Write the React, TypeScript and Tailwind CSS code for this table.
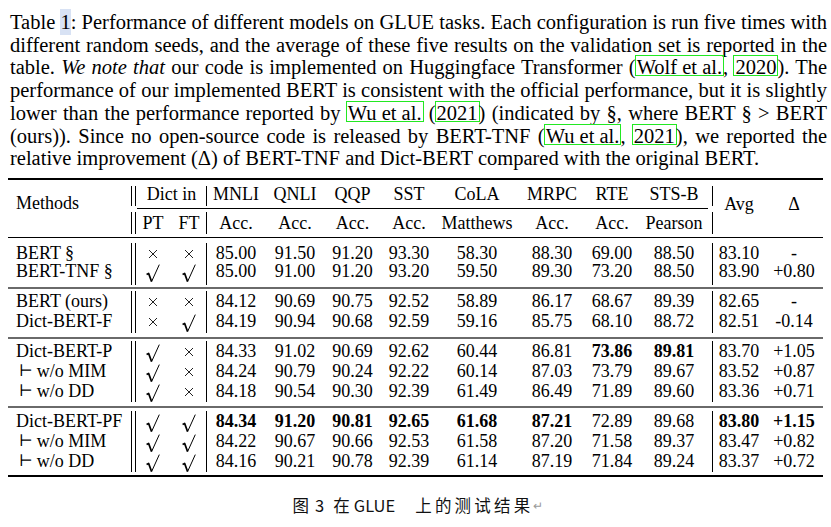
import React from 'react'

const metricW = ['w-[58px]', 'w-[60px]', 'w-[55px]', 'w-[58px]', 'w-[78px]', 'w-[72px]', 'w-[48px]', 'w-[76px]']
const headStart = ['col-start-6', 'col-start-7', 'col-start-8', 'col-start-9', 'col-start-10', 'col-start-11', 'col-start-12', 'col-start-13']
const tasks = ['MNLI', 'QNLI', 'QQP', 'SST', 'CoLA', 'MRPC', 'RTE', 'STS-B']
const metrics = ['Acc.', 'Acc.', 'Acc.', 'Acc.', 'Matthews', 'Acc.', 'Acc.', 'Pearson']

type Row = {
  name: string
  sub?: boolean
  pt: boolean
  ft: boolean
  vals: string[]
  bold?: number[]
  avg: string
  delta: string
  boldTail?: boolean
}

type Group = { rowH: string; wrap: string; col: string; rows: Row[] }

const groups: Group[] = [
  {
    rowH: 'h-[18px]',
    wrap: 'pt-[5px] pb-[2px]',
    col: 'pt-px pb-[5px]',
    rows: [
      { name: 'BERT §', pt: false, ft: false, vals: ['85.00', '91.50', '91.20', '93.30', '58.30', '88.30', '69.00', '88.50'], avg: '83.10', delta: '-' },
      { name: 'BERT-TNF §', pt: true, ft: true, vals: ['85.00', '91.00', '91.20', '93.20', '59.50', '89.30', '73.20', '88.50'], avg: '83.90', delta: '+0.80' },
    ],
  },
  {
    rowH: 'h-[20px]',
    wrap: 'pt-[2px] pb-[4px]',
    col: 'pb-[2px]',
    rows: [
      { name: 'BERT (ours)', pt: false, ft: false, vals: ['84.12', '90.69', '90.75', '92.52', '58.89', '86.17', '68.67', '89.39'], avg: '82.65', delta: '-' },
      { name: 'Dict-BERT-F', pt: false, ft: true, vals: ['84.19', '90.94', '90.68', '92.59', '59.16', '85.75', '68.10', '88.72'], avg: '82.51', delta: '-0.14' },
    ],
  },
  {
    rowH: 'h-[20px]',
    wrap: 'pt-[2px] pb-[4px]',
    col: 'pb-px',
    rows: [
      { name: 'Dict-BERT-P', pt: true, ft: false, vals: ['84.33', '91.02', '90.69', '92.62', '60.44', '86.81', '73.86', '89.81'], bold: [6, 7], avg: '83.70', delta: '+1.05' },
      { name: 'w/o MIM', sub: true, pt: true, ft: false, vals: ['84.24', '90.79', '90.24', '92.22', '60.14', '87.03', '73.79', '89.67'], avg: '83.52', delta: '+0.87' },
      { name: 'w/o DD', sub: true, pt: true, ft: false, vals: ['84.18', '90.54', '90.30', '92.39', '61.49', '86.49', '71.89', '89.60'], avg: '83.36', delta: '+0.71' },
    ],
  },
  {
    rowH: 'h-[20px]',
    wrap: 'pt-[3px] pb-[3px]',
    col: 'pb-px',
    rows: [
      { name: 'Dict-BERT-PF', pt: true, ft: true, vals: ['84.34', '91.20', '90.81', '92.65', '61.68', '87.21', '72.89', '89.68'], bold: [0, 1, 2, 3, 4, 5], avg: '83.80', delta: '+1.15', boldTail: true },
      { name: 'w/o MIM', sub: true, pt: true, ft: true, vals: ['84.22', '90.67', '90.66', '92.53', '61.58', '87.20', '71.58', '89.37'], avg: '83.47', delta: '+0.82' },
      { name: 'w/o DD', sub: true, pt: true, ft: true, vals: ['84.16', '90.21', '90.78', '92.39', '61.14', '87.19', '71.84', '89.24'], avg: '83.37', delta: '+0.72' },
    ],
  },
]

// √ and × drawn to match the LaTeX glyphs
function Mark({ on }: { on: boolean }) {
  if (on)
    return (
      <svg width="14" height="19" viewBox="0 0 14 19" className="mt-[5px] shrink-0">
        <path d="M0.6 10.4 L2.6 9.4 L5.6 17.6" fill="none" stroke="#000" strokeWidth="1.7" strokeLinejoin="round" />
        <path d="M5.6 17.6 L13.3 0.6" fill="none" stroke="#000" strokeWidth="1" />
      </svg>
    )
  return (
    <svg width="10" height="10" viewBox="0 0 10 10" className="mt-[2px] shrink-0">
      <path d="M1 1 L9 9 M9 1 L1 9" stroke="#222" strokeWidth="1" />
    </svg>
  )
}

function DoubleBar() {
  return (
    <div className="flex w-[7px]">
      <div className="ml-px w-[5px] border-x border-black" />
    </div>
  )
}

function Cite({ children }: { children: React.ReactNode }) {
  return <span className="inline-block px-px pt-[3px] leading-[16px] outline-1 outline-[#22e822]">{children}</span>
}

function DataGroup({ g }: { g: Group }) {
  const cell = `${g.rowH} flex items-center justify-center whitespace-nowrap`
  return (
    <div className={`flex ${g.wrap}`}>
      <div className={`flex w-[122px] flex-col pl-2 ${g.col}`}>
        {g.rows.map((r, i) => (
          <div key={i} className={`${g.rowH} flex items-center whitespace-nowrap`}>
            {r.sub && <span className="ml-[3px] mr-[4px] font-['DejaVu_Serif',serif] text-[16px]">⊢</span>}
            {r.name}
          </div>
        ))}
      </div>
      <DoubleBar />
      <div className={`flex w-[32px] flex-col ${g.col}`}>
        {g.rows.map((r, i) => (
          <div key={i} className={cell}>
            <Mark on={r.pt} />
          </div>
        ))}
      </div>
      <div className={`flex w-[37px] flex-col pl-[3px] ${g.col}`}>
        {g.rows.map((r, i) => (
          <div key={i} className={cell}>
            <Mark on={r.ft} />
          </div>
        ))}
      </div>
      <div className="w-px bg-black" />
      {metricW.map((w, c) => (
        <div key={c} className={`flex ${w} flex-col ${g.col}`}>
          {g.rows.map((r, i) => (
            <div key={i} className={`${cell} ${r.bold?.includes(c) ? 'font-bold' : ''}`}>
              {r.vals[c]}
            </div>
          ))}
        </div>
      ))}
      <div className="w-px bg-black" />
      <div className={`flex w-[52px] flex-col ${g.col}`}>
        {g.rows.map((r, i) => (
          <div key={i} className={`${cell} ${r.boldTail ? 'font-bold' : ''}`}>
            {r.avg}
          </div>
        ))}
      </div>
      <div className={`flex w-[58px] flex-col ${g.col}`}>
        {g.rows.map((r, i) => (
          <div key={i} className={`${cell} ${r.boldTail ? 'font-bold' : ''}`}>
            {r.delta}
          </div>
        ))}
      </div>
    </div>
  )
}

export default function App() {
  const line = 'whitespace-nowrap text-justify [text-align-last:justify]'
  return (
    <div className="h-[527px] w-[831px] overflow-hidden bg-white font-['Liberation_Serif',serif] text-black">
      <div className="w-[827px] pl-[10px] pt-[11px] text-[20.5px] leading-[22.7px]">
        <div className={line}>
          Table <span className="bg-[#d8e2f4] py-[2px]">1</span>: Performance of different models on GLUE tasks. Each configuration is run five times with
        </div>
        <div className={line}>
          different random seeds, and the average of these five results on the validation set is reported in the
        </div>
        <div className={line}>
          table. <i>We note that</i> our code is implemented on Huggingface Transformer (<Cite>Wolf et al.</Cite>, <Cite>2020</Cite>). The
        </div>
        <div className={line}>
          performance of our implemented BERT is consistent with the official performance, but it is slightly
        </div>
        <div className={line}>
          lower than the performance reported by <Cite>Wu et al.</Cite> (<Cite>2021</Cite>) (indicated by §, where BERT § &gt; BERT
        </div>
        <div className={line}>
          (ours)). Since no open-source code is released by BERT-TNF (<Cite>Wu et al.</Cite>, <Cite>2021</Cite>), we reported the
        </div>
        <div className="whitespace-nowrap">
          relative improvement (Δ) of BERT-TNF and Dict-BERT compared with the original BERT.
        </div>
      </div>

      <div className="ml-[8px] mt-[8px] w-[815px] text-[18px] leading-none">
        <div className="h-[2px] bg-black" />
        <div className="grid grid-cols-[122px_7px_32px_37px_1px_58px_60px_55px_58px_78px_72px_48px_76px_1px_52px_58px] grid-rows-[28px_1px_28px]">
          <div className="col-start-1 row-span-3 row-start-1 flex items-center pb-[10px] pl-2">Methods</div>
          <div className="col-start-2 row-start-1 flex pb-[2px] pt-[6px]">
            <div className="ml-px w-[5px] border-x border-black" />
          </div>
          <div className="col-start-2 row-start-3 flex py-[3px]">
            <div className="ml-px w-[5px] border-x border-black" />
          </div>
          <div className="col-span-2 col-start-3 row-start-1 flex items-center justify-center">Dict in</div>
          <div className="col-start-5 row-start-1 pb-[2px] pt-[6px]">
            <div className="h-full bg-black" />
          </div>
          {tasks.map((t, c) => (
            <div key={t} className={`${headStart[c]} row-start-1 flex items-center justify-center whitespace-nowrap`}>
              {t}
            </div>
          ))}
          <div className="col-start-14 row-start-1 pb-[2px] pt-[6px]">
            <div className="h-full bg-black" />
          </div>
          <div className="col-start-15 row-span-3 row-start-1 flex items-center justify-center pb-[8px]">Avg</div>
          <div className="col-start-16 row-span-3 row-start-1 flex items-center justify-center pb-[8px]">Δ</div>
          <div className="col-start-3 col-end-14 row-start-2 mr-[4px] bg-black" />
          <div className="col-start-3 row-start-3 flex items-center justify-center">PT</div>
          <div className="col-start-4 row-start-3 flex items-center justify-center pl-[3px]">FT</div>
          <div className="col-start-5 row-start-3 py-[3px]">
            <div className="h-full bg-black" />
          </div>
          {metrics.map((m, c) => (
            <div key={c} className={`${headStart[c]} row-start-3 flex items-center justify-center whitespace-nowrap`}>
              {m}
            </div>
          ))}
          <div className="col-start-14 row-start-3 py-[3px]">
            <div className="h-full bg-black" />
          </div>
        </div>
        <div className="h-px bg-black" />
        {groups.map((g, i) => (
          <React.Fragment key={i}>
            {i > 0 && <div className="h-[2px] bg-[#6a6a6a]" />}
            <DataGroup g={g} />
          </React.Fragment>
        ))}
        <div className="h-[2px] bg-black" />
      </div>

      <div className="mt-[16px] flex items-center justify-center pl-[5px] font-['Noto_Sans_CJK_SC',sans-serif] text-[16.5px] leading-[24px] text-[#111]">
        <span>图</span>
        <span className="ml-[6px]">3</span>
        <span className="ml-[9px]">在</span>
        <span className="ml-[4px]">GLUE</span>
        <span className="ml-[20px] tracking-[3.2px]">上的测试结果</span>
        <span className="text-[12px] text-[#9a9a9a]">↵</span>
      </div>
    </div>
  )
}
